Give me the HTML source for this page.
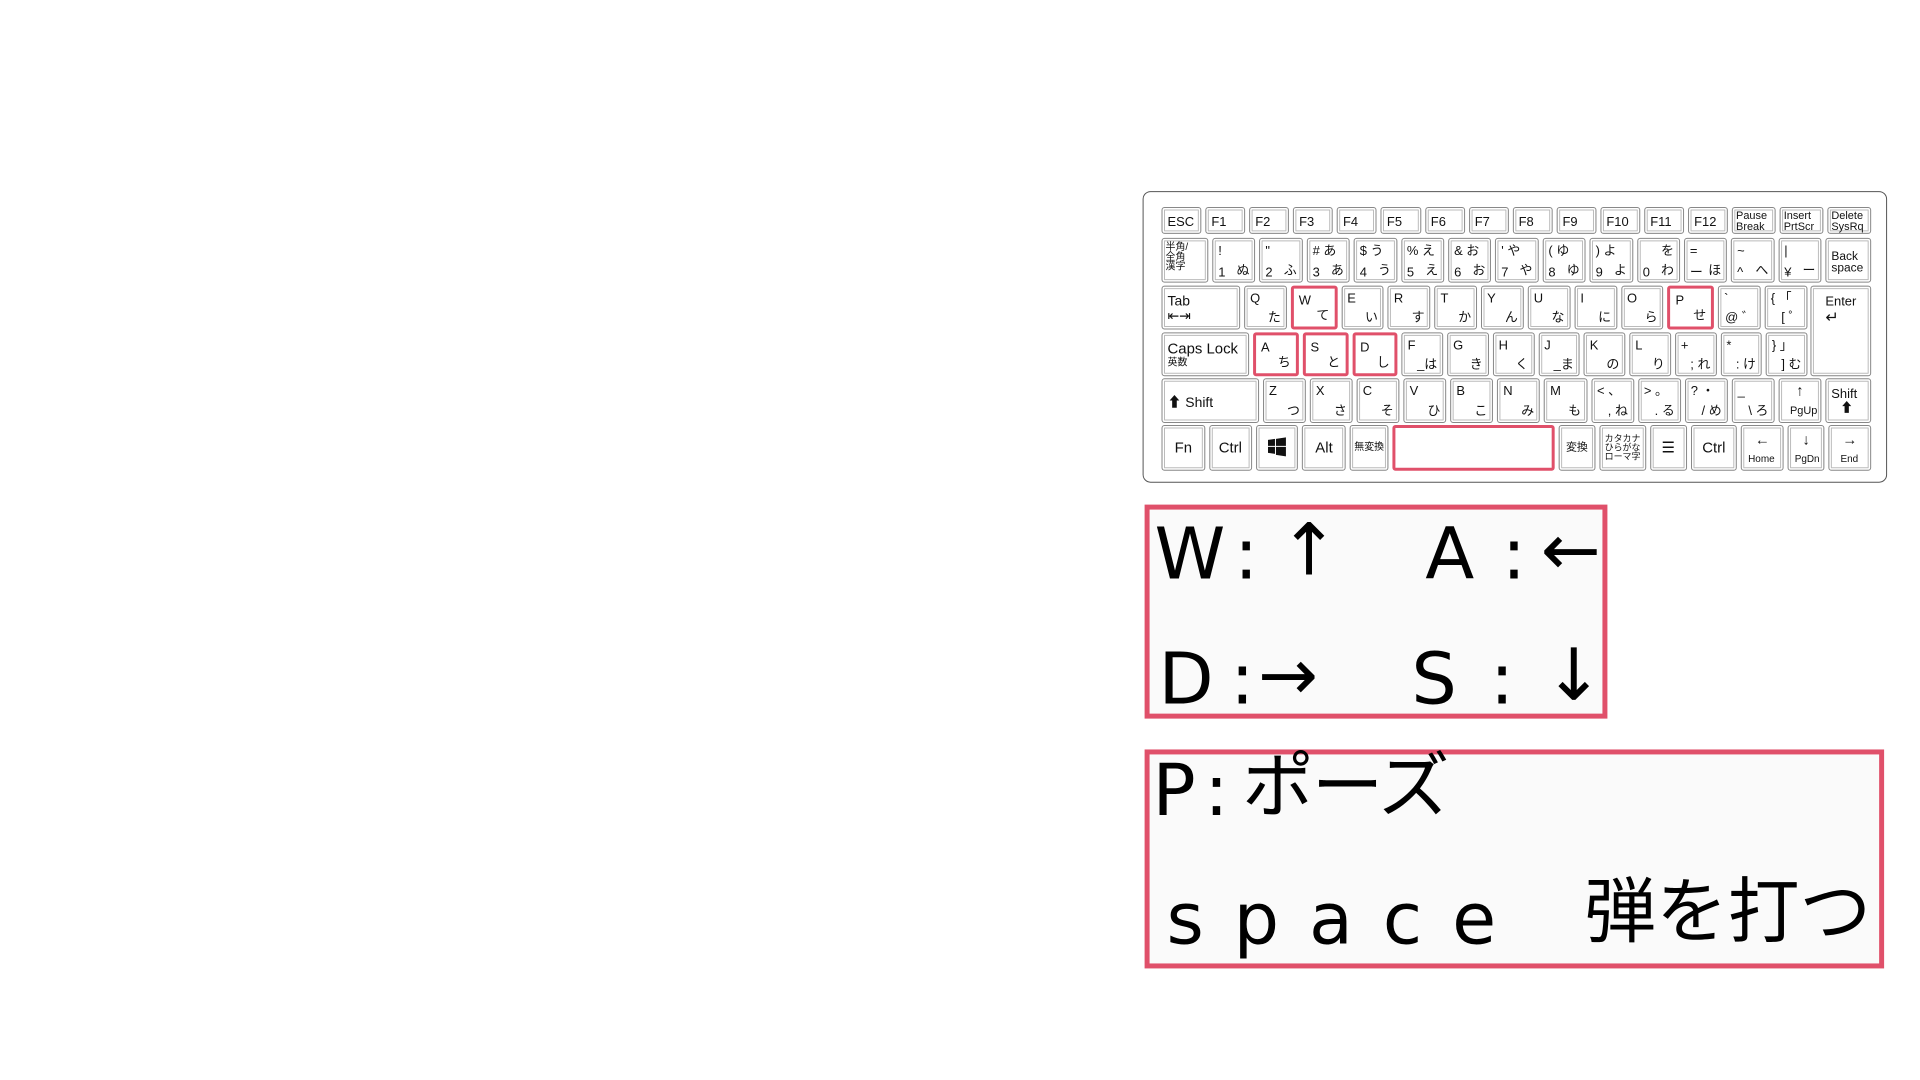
<!DOCTYPE html>
<html><head><meta charset="utf-8"><style>
body{margin:0;width:1920px;height:1080px;background:#fff;position:relative;overflow:hidden;font-family:"Liberation Sans","Noto Sans CJK JP",sans-serif;}
#w{position:absolute;left:0;top:0;width:1920px;height:1080px;transform:scale(0.9953);transform-origin:0 0}
.kb{position:absolute;left:1148px;top:192px;width:748px;height:293px;border:1.5px solid #555;border-radius:8px;background:#fff;box-sizing:border-box}
.row{position:absolute;display:flex;gap:4px;left:1167px}
.k{position:relative;flex:1 1 0;border:1.5px solid #888;border-radius:3px;background:#fff;box-shadow:inset 0 0 0 1.5px #fff,inset 0 0 0 2.5px #bbb;box-sizing:border-box;font-size:13px;color:#111;line-height:1}
.k .t{position:absolute;left:5px;top:5px}
.k .b{position:absolute;right:5px;bottom:5px}
.k .c{position:absolute;left:0;right:0;top:50%;transform:translateY(-50%);text-align:center}
.r{border:3px solid #e0506a;box-shadow:none}
.box{position:absolute;border:5px solid #e0506a;background:#fafafa;box-sizing:border-box}
.g{position:absolute;font-family:"DejaVu Sans","Noto Sans CJK JP",sans-serif;font-size:72px;line-height:1;color:#000}
</style></head><body><div id="w">
<div class="kb"></div>
<div class="row" style="top:208px;height:27px;width:713px">
<div class="k"><span class="t" style="top:7px">ESC</span></div><div class="k"><span class="t" style="top:7px">F1</span></div><div class="k"><span class="t" style="top:7px">F2</span></div><div class="k"><span class="t" style="top:7px">F3</span></div><div class="k"><span class="t" style="top:7px">F4</span></div><div class="k"><span class="t" style="top:7px">F5</span></div><div class="k"><span class="t" style="top:7px">F6</span></div><div class="k"><span class="t" style="top:7px">F7</span></div><div class="k"><span class="t" style="top:7px">F8</span></div><div class="k"><span class="t" style="top:7px">F9</span></div><div class="k"><span class="t" style="top:7px">F10</span></div><div class="k"><span class="t" style="top:7px">F11</span></div><div class="k"><span class="t" style="top:7px">F12</span></div>
<div class="k" style="flex-grow:1.1;font-size:11px"><span class="t" style="top:3px;left:3px">Pause<br>Break</span></div><div class="k" style="flex-grow:1.1;font-size:11px"><span class="t" style="top:3px;left:3px">Insert<br>PrtScr</span></div><div class="k" style="flex-grow:1.1;font-size:11px"><span class="t" style="top:3px;left:3px">Delete<br>SysRq</span></div>
</div>
<div class="row" style="top:239px;height:45px;width:713px">
<div class="k" style="flex:0 0 47px;font-size:10px"><span class="t" style="left:3px;top:4px">半角/<br>全角<br>漢字</span></div>
<div class="k"><span class="t">!</span><span class="t" style="top:27px">1</span><span class="b">ぬ</span></div>
<div class="k"><span class="t">"</span><span class="t" style="top:27px">2</span><span class="b">ふ</span></div>
<div class="k"><span class="t"># あ</span><span class="t" style="top:27px">3</span><span class="b">あ</span></div>
<div class="k"><span class="t">$ う</span><span class="t" style="top:27px">4</span><span class="b">う</span></div>
<div class="k"><span class="t">% え</span><span class="t" style="top:27px">5</span><span class="b">え</span></div>
<div class="k"><span class="t">&amp; お</span><span class="t" style="top:27px">6</span><span class="b">お</span></div>
<div class="k"><span class="t">' や</span><span class="t" style="top:27px">7</span><span class="b">や</span></div>
<div class="k"><span class="t">( ゆ</span><span class="t" style="top:27px">8</span><span class="b">ゆ</span></div>
<div class="k"><span class="t">) よ</span><span class="t" style="top:27px">9</span><span class="b">よ</span></div>
<div class="k"><span class="t" style="left:auto;right:5px">を</span><span class="t" style="top:27px">0</span><span class="b">わ</span></div>
<div class="k"><span class="t">=</span><span class="t" style="top:27px">ー</span><span class="b">ほ</span></div>
<div class="k"><span class="t">~</span><span class="t" style="top:27px">^</span><span class="b">へ</span></div>
<div class="k"><span class="t">|</span><span class="t" style="top:27px">¥</span><span class="b">ー</span></div>
<div class="k" style="flex:0 0 46px;font-size:12px"><span class="t" style="top:11px;left:5px">Back<br>space</span></div>
</div>
<div class="row" style="top:287px;height:44px;width:649px">
<div class="k" style="flex:0 0 79px;font-size:14px"><span class="t" style="top:7px">Tab</span><span class="t" style="top:22px">⇤⇥</span></div>
<div class="k"><span class="t">Q</span><span class="b">た</span></div>
<div class="k r"><span class="t">W</span><span class="b">て</span></div>
<div class="k"><span class="t">E</span><span class="b">い</span></div>
<div class="k"><span class="t">R</span><span class="b">す</span></div>
<div class="k"><span class="t">T</span><span class="b">か</span></div>
<div class="k"><span class="t">Y</span><span class="b">ん</span></div>
<div class="k"><span class="t">U</span><span class="b">な</span></div>
<div class="k"><span class="t">I</span><span class="b">に</span></div>
<div class="k"><span class="t">O</span><span class="b">ら</span></div>
<div class="k r"><span class="t">P</span><span class="b">せ</span></div>
<div class="k"><span class="t">`</span><span class="b">@ ゛</span></div>
<div class="k"><span class="t">{ 「</span><span class="b">[ ゜</span></div>
</div>
<div class="k" style="position:absolute;left:1819px;top:287px;width:61px;height:91px"><span class="t" style="top:8px;left:14px">Enter</span><span class="t" style="top:24px;left:14px;font-size:16px">↵</span></div>
<div class="row" style="top:334px;height:44px;width:649px">
<div class="k" style="flex:0 0 88px;font-size:15px"><span class="t" style="top:8px">Caps Lock</span><span class="t" style="top:25px;font-size:10px">英数</span></div>
<div class="k r"><span class="t">A</span><span class="b">ち</span></div>
<div class="k r"><span class="t">S</span><span class="b">と</span></div>
<div class="k r"><span class="t">D</span><span class="b">し</span></div>
<div class="k"><span class="t">F</span><span class="b">_は</span></div>
<div class="k"><span class="t">G</span><span class="b">き</span></div>
<div class="k"><span class="t">H</span><span class="b">く</span></div>
<div class="k"><span class="t">J</span><span class="b">_ま</span></div>
<div class="k"><span class="t">K</span><span class="b">の</span></div>
<div class="k"><span class="t">L</span><span class="b">り</span></div>
<div class="k"><span class="t">+</span><span class="b">; れ</span></div>
<div class="k"><span class="t">*</span><span class="b">: け</span></div>
<div class="k"><span class="t">} 」</span><span class="b">] む</span></div>
</div>
<div class="row" style="top:380px;height:45px;width:713px">
<div class="k" style="flex:0 0 98px;font-size:14px"><span class="t" style="top:16px">⬆ Shift</span></div>
<div class="k"><span class="t">Z</span><span class="b">つ</span></div>
<div class="k"><span class="t">X</span><span class="b">さ</span></div>
<div class="k"><span class="t">C</span><span class="b">そ</span></div>
<div class="k"><span class="t">V</span><span class="b">ひ</span></div>
<div class="k"><span class="t">B</span><span class="b">こ</span></div>
<div class="k"><span class="t">N</span><span class="b">み</span></div>
<div class="k"><span class="t">M</span><span class="b">も</span></div>
<div class="k"><span class="t">&lt; 、</span><span class="b">, ね</span></div>
<div class="k"><span class="t">&gt; 。</span><span class="b">. る</span></div>
<div class="k"><span class="t">? ・</span><span class="b">/ め</span></div>
<div class="k"><span class="t">_</span><span class="b">\ ろ</span></div>
<div class="k" style="font-size:11px"><span class="c" style="top:12px;font-size:15px">↑</span><span class="b" style="right:3px">PgUp</span></div>
<div class="k" style="flex:0 0 46px"><span class="t" style="top:8px">Shift</span><span class="t" style="top:22px;left:14px">⬆</span></div>
</div>
<div class="row" style="top:427px;height:46px;width:713px">
<div class="k" style="flex:44 1 0;font-size:15px"><span class="c">Fn</span></div>
<div class="k" style="flex:43 1 0;font-size:15px"><span class="c">Ctrl</span></div>
<div class="k" style="flex:43 1 0"><span class="c"><svg width="20" height="20" viewBox="0 0 20 20"><path d="M1 3l7-1v7H1zM9 2l10-1.5V9H9zM1 10h7v7l-7-1zM9 10h10v9.5L9 18z" fill="#111"/></svg></span></div>
<div class="k" style="flex:44 1 0;font-size:15px"><span class="c">Alt</span></div>
<div class="k" style="flex:39 1 0;font-size:10px"><span class="c">無変換</span></div>
<div class="k r" style="flex:165 1 0"></div>
<div class="k" style="flex:37 1 0;font-size:11px"><span class="c">変換</span></div>
<div class="k" style="flex:47 1 0;font-size:9px"><span class="c">カタカナ<br>ひらがな<br>ローマ字</span></div>
<div class="k" style="flex:37 1 0"><span class="c" style="font-size:15px">☰</span></div>
<div class="k" style="flex:47 1 0;font-size:15px"><span class="c">Ctrl</span></div>
<div class="k" style="flex:43 1 0;font-size:10px"><span class="c" style="top:14px;font-size:15px">←</span><span class="b" style="right:8px">Home</span></div>
<div class="k" style="flex:37 1 0;font-size:10px"><span class="c" style="top:14px;font-size:15px">↓</span><span class="b" style="right:4px">PgDn</span></div>
<div class="k" style="flex:43 1 0;font-size:10px"><span class="c" style="top:14px;font-size:15px">→</span><span class="b" style="right:12px">End</span></div>
</div>

<div class="box" style="left:1150px;top:507px;width:465px;height:215px"></div>
<div class="g" style="left:1160px;top:520px">W</div>
<div class="g" style="left:1240px;top:520px">:</div>
<div class="g" style="left:1285px;top:516px">↑</div>
<div class="g" style="left:1432px;top:520px">A</div>
<div class="g" style="left:1509px;top:520px">:</div>
<div class="g" style="left:1548px;top:516px">←</div>
<div class="g" style="left:1164px;top:646px">D</div>
<div class="g" style="left:1236px;top:646px">:</div>
<div class="g" style="left:1264px;top:642px">→</div>
<div class="g" style="left:1418px;top:646px">S</div>
<div class="g" style="left:1497px;top:646px">:</div>
<div class="g" style="left:1551px;top:642px">↓</div>

<div class="box" style="left:1150px;top:753px;width:743px;height:220px"></div>
<div class="g" style="left:1158px;top:758px">P</div>
<div class="g" style="left:1210px;top:758px">:</div>
<div class="g" style="left:1248px;top:754px;letter-spacing:-2px">ポーズ</div>
<div class="g" style="left:1172px;top:887px;letter-spacing:30px">space</div>
<div class="g" style="left:1592px;top:880px;font-size:72px">弾を打つ</div>
</div></body></html>
